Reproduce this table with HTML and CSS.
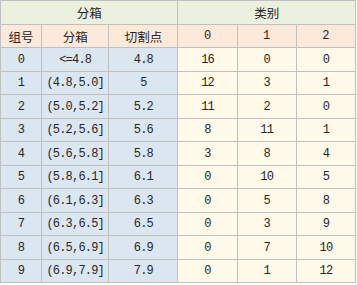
FILE: index.html
```html
<!DOCTYPE html>
<html lang="zh-CN">

<head>
    <meta charset="UTF-8">
    <meta name="viewport" content="width=device-width, initial-scale=1.0">
    <title>分箱</title>
    <link rel="stylesheet" href="styles.css">
</head>

<body>
    <table class="bins">
        <colgroup>
            <col class="c-id">
            <col class="c-range">
            <col class="c-cut">
            <col class="c-cls">
            <col class="c-cls">
            <col class="c-cls">
        </colgroup>
        <thead>
            <tr class="group-row">
                <th colspan="3">分箱</th>
                <th colspan="3">类别</th>
            </tr>
            <tr class="sub-row">
                <th>组号</th>
                <th>分箱</th>
                <th>切割点</th>
                <th class="num">0</th>
                <th class="num">1</th>
                <th class="num">2</th>
            </tr>
        </thead>
        <tbody>
            <tr><td class="bin">0</td><td class="bin">&lt;=4.8</td><td class="bin">4.8</td><td>16</td><td>0</td><td>0</td></tr>
            <tr><td class="bin">1</td><td class="bin">(4.8,5.0]</td><td class="bin">5</td><td>12</td><td>3</td><td>1</td></tr>
            <tr><td class="bin">2</td><td class="bin">(5.0,5.2]</td><td class="bin">5.2</td><td>11</td><td>2</td><td>0</td></tr>
            <tr><td class="bin">3</td><td class="bin">(5.2,5.6]</td><td class="bin">5.6</td><td>8</td><td>11</td><td>1</td></tr>
            <tr><td class="bin">4</td><td class="bin">(5.6,5.8]</td><td class="bin">5.8</td><td>3</td><td>8</td><td>4</td></tr>
            <tr><td class="bin">5</td><td class="bin">(5.8,6.1]</td><td class="bin">6.1</td><td>0</td><td>10</td><td>5</td></tr>
            <tr><td class="bin">6</td><td class="bin">(6.1,6.3]</td><td class="bin">6.3</td><td>0</td><td>5</td><td>8</td></tr>
            <tr><td class="bin">7</td><td class="bin">(6.3,6.5]</td><td class="bin">6.5</td><td>0</td><td>3</td><td>9</td></tr>
            <tr><td class="bin">8</td><td class="bin">(6.5,6.9]</td><td class="bin">6.9</td><td>0</td><td>7</td><td>10</td></tr>
            <tr><td class="bin">9</td><td class="bin">(6.9,7.9]</td><td class="bin">7.9</td><td>0</td><td>1</td><td>12</td></tr>
        </tbody>
    </table>
</body>

</html>
```

FILE: styles.css
```css
body {
    margin: 0;
    padding: 0;
    background-color: #fff;
    font-family: "Liberation Mono", "Noto Sans CJK SC", monospace;
    color: #262626;
}

.bins {
    border-collapse: collapse;
    table-layout: fixed;
    width: 356px;
}

.c-id {
    width: 41px;
}

.c-range {
    width: 67px;
}

.c-cut {
    width: 69px;
}

.c-cls {
    width: 59px;
}

th,
td {
    border: 1px solid #c0c0c0;
    height: 22px;
    padding: 0;
    text-align: center;
    font-size: 12px;
    letter-spacing: -0.8px;
    white-space: nowrap;
}

th {
    font-family: "Noto Sans CJK SC", sans-serif;
    font-size: 12.5px;
    font-weight: normal;
    letter-spacing: 0;
}

th.num {
    font-family: "Liberation Mono", monospace;
    font-size: 12px;
}

.group-row th {
    background-color: #ebf1de;
    height: 23px;
}

.sub-row th {
    background-color: #fde9d9;
}

td {
    background-color: #fff9e9;
}

td.bin {
    background-color: #dce6f1;
}

tbody tr:nth-child(odd) td {
    height: 23px;
}
```
